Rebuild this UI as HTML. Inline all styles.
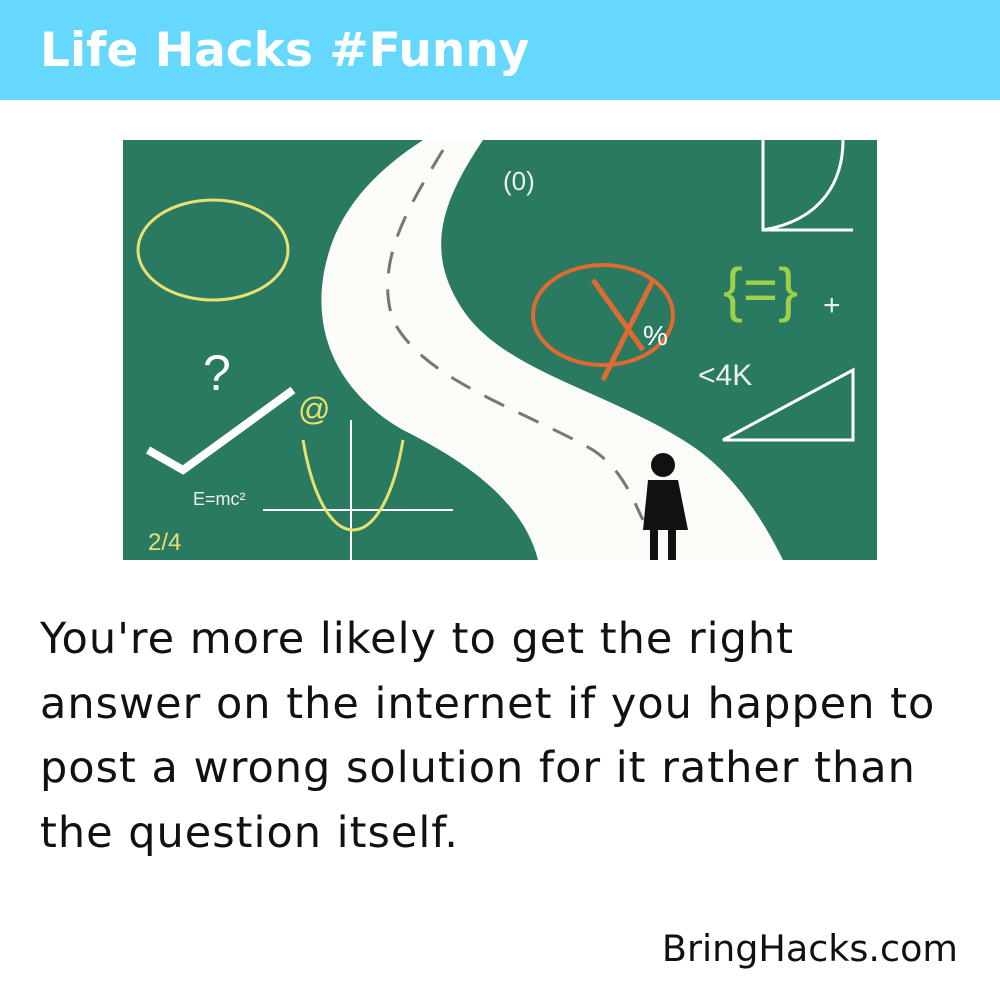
<!DOCTYPE html>
<html><head><style>
body{margin:0;width:1000px;height:1000px;background:#fff;position:relative;overflow:hidden;font-family:"DejaVu Sans",sans-serif;}
.hdr{position:absolute;left:0;top:0;width:1000px;height:100px;background:#66d8fe;}
.hdr span{position:absolute;left:40px;top:23px;color:#fff;font-size:47px;font-weight:bold;}
.img{position:absolute;left:123px;top:140px;width:754px;height:420px;background:#2a7a62;overflow:hidden;}
.txt{position:absolute;left:40px;top:607px;font-size:43px;line-height:64.5px;color:#111;white-space:nowrap;letter-spacing:1px;}
.ft{position:absolute;right:42px;top:927px;font-size:36.5px;color:#111;}
</style></head><body>
<div class="hdr"><span>Life Hacks #Funny</span></div>
<div class="img">
<svg width="754" height="420" viewBox="0 0 754 420">
<path d="M300 0 L360 0 C320 60 300 110 340 170 C380 230 480 250 560 300 C610 330 640 380 660 420 L415 420 C400 360 340 320 280 290 C210 250 180 180 210 100 C230 50 270 20 300 0Z" fill="#fbfbf8"/>
<path d="M320 10 C290 60 250 120 270 180 C300 240 400 270 470 310 C500 330 510 360 520 380" stroke="#777" stroke-width="3" fill="none" stroke-dasharray="22 16"/>
<ellipse cx="90" cy="110" rx="75" ry="50" stroke="#e8e070" stroke-width="3" fill="none"/>
<path d="M25 310 L60 330 L170 250" stroke="#fff" stroke-width="8" fill="none"/>
<ellipse cx="480" cy="175" rx="70" ry="50" stroke="#e06a30" stroke-width="4" fill="none"/>
<path d="M470 140 L520 210 M530 140 L480 240" stroke="#e06a30" stroke-width="5"/>
<path d="M140 370 L330 370 M228 280 L228 420" stroke="#fff" stroke-width="2"/>
<path d="M180 300 C200 420 260 420 280 300" stroke="#e8e070" stroke-width="3" fill="none"/>
<path d="M600 300 L730 230 L730 300 Z" stroke="#fff" stroke-width="3" fill="none"/>
<path d="M640 0 L640 90 L730 90 M640 90 C700 80 720 40 720 0" stroke="#fff" stroke-width="3" fill="none"/>
<text x="600" y="170" fill="#9fd04a" font-size="60" font-family="Liberation Sans">{=}</text>
<text x="700" y="175" fill="#eee" font-size="30" font-family="Liberation Sans">+</text>
<text x="575" y="245" fill="#eee" font-size="30" font-family="Liberation Sans">&lt;4K</text>
<text x="380" y="50" fill="#eee" font-size="26" font-family="Liberation Sans">(0)</text>
<text x="70" y="365" fill="#eee" font-size="18" font-family="Liberation Sans">E=mc²</text>
<text x="25" y="410" fill="#e8e070" font-size="24" font-family="Liberation Sans">2/4</text>
<text x="175" y="280" fill="#e8e070" font-size="32" font-family="Liberation Sans">@</text>
<text x="80" y="250" fill="#fff" font-size="50" font-family="Liberation Sans">?</text>
<text x="520" y="205" fill="#fff" font-size="28" font-family="Liberation Sans">%</text>
<circle cx="540" cy="325" r="12" fill="#111"/>
<path d="M525 340 L555 340 L565 390 L520 390Z" fill="#111"/>
<rect x="527" y="390" width="8" height="30" fill="#111"/><rect x="545" y="390" width="8" height="30" fill="#111"/>
</svg>
</div>
<div class="txt">You're more likely to get the right<br>answer on the internet if you happen to<br>post a wrong solution for it rather than<br>the question itself.</div>
<div class="ft">BringHacks.com</div>
</body></html>
